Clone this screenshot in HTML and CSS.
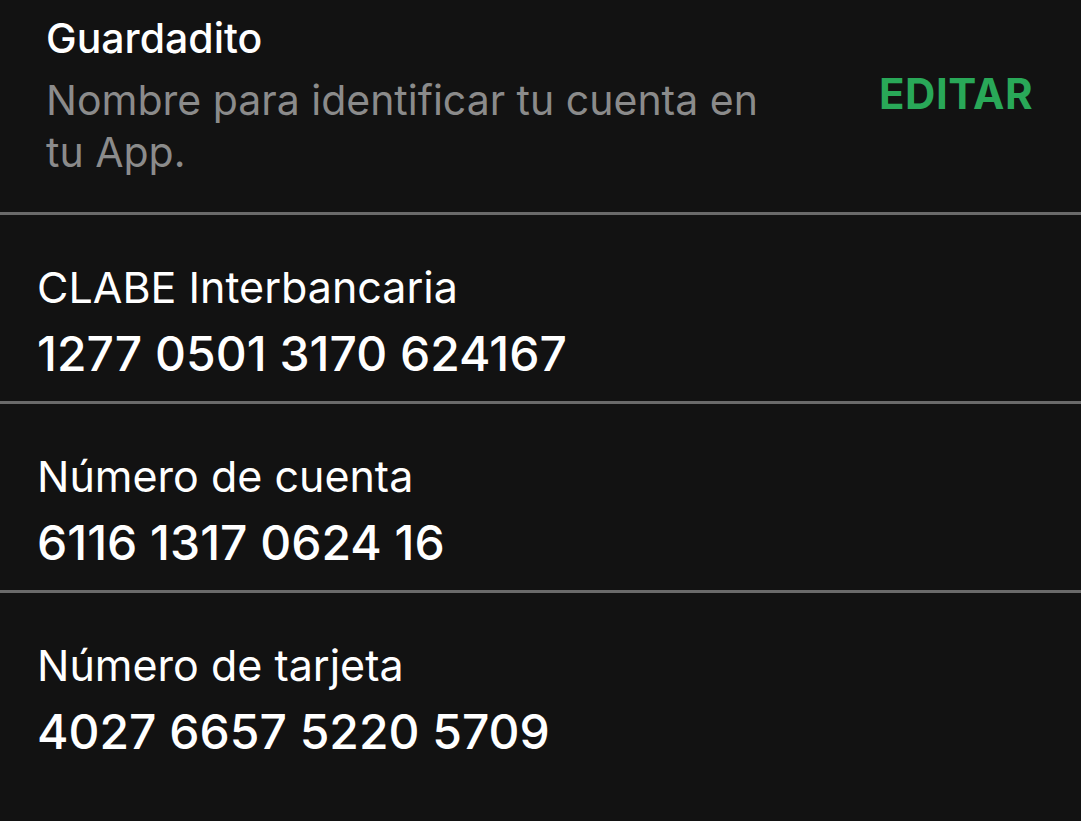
FILE: index.html
```html
<!DOCTYPE html>
<html lang="es">
<head>
<meta charset="utf-8">
<link rel="stylesheet" href="styles.css">
</head>
<body>
<section class="alias">
  <div class="alias-text">
    <div class="alias-name">Guardadito</div>
    <div class="alias-hint">Nombre para identificar tu cuenta en tu App.</div>
  </div>
  <button class="edit">EDITAR</button>
</section>
<section class="row">
  <div class="label">CLABE Interbancaria</div>
  <div class="value">1277 0501 3170 624167</div>
</section>
<section class="row">
  <div class="label">Número de cuenta</div>
  <div class="value">6116 1317 0624 16</div>
</section>
<section class="row last">
  <div class="label">Número de tarjeta</div>
  <div class="value">4027 6657 5220 5709</div>
</section>
</body>
</html>
```

FILE: styles.css
```css
html, body {
  margin: 0;
  padding: 0;
  background: #121212;
}
body {
  font-family: Inter, "Noto Sans", sans-serif;
  color: #ffffff;
  width: 1081px;
  height: 821px;
  overflow: hidden;
}
.alias {
  display: flex;
  align-items: flex-start;
  justify-content: space-between;
  height: 215px;
  box-sizing: border-box;
  padding: 14px 48px 0 46px;
  border-bottom: 3px solid #6a6a6a;
}
.alias-text {
  width: 740px;
}
.alias-name {
  font-size: 41px;
  line-height: 48px;
  font-weight: 500;
}
.alias-hint {
  margin-top: 12px;
  font-size: 41px;
  line-height: 52px;
  color: #8b8b8b;
}
.edit {
  background: none;
  border: 0;
  padding: 0;
  margin-top: 55px;
  font-family: inherit;
  font-size: 42px;
  line-height: 50px;
  font-weight: 700;
  color: #29a858;
  letter-spacing: 0.5px;
}
.row {
  height: 189px;
  box-sizing: border-box;
  padding: 47px 37px 0;
  border-bottom: 3px solid #6a6a6a;
}
.row.last {
  border-bottom: 0;
}
.label {
  font-size: 43px;
  line-height: 50px;
}
.value {
  margin-top: 16px;
  font-size: 48px;
  line-height: 52px;
  font-weight: 500;
}
```
